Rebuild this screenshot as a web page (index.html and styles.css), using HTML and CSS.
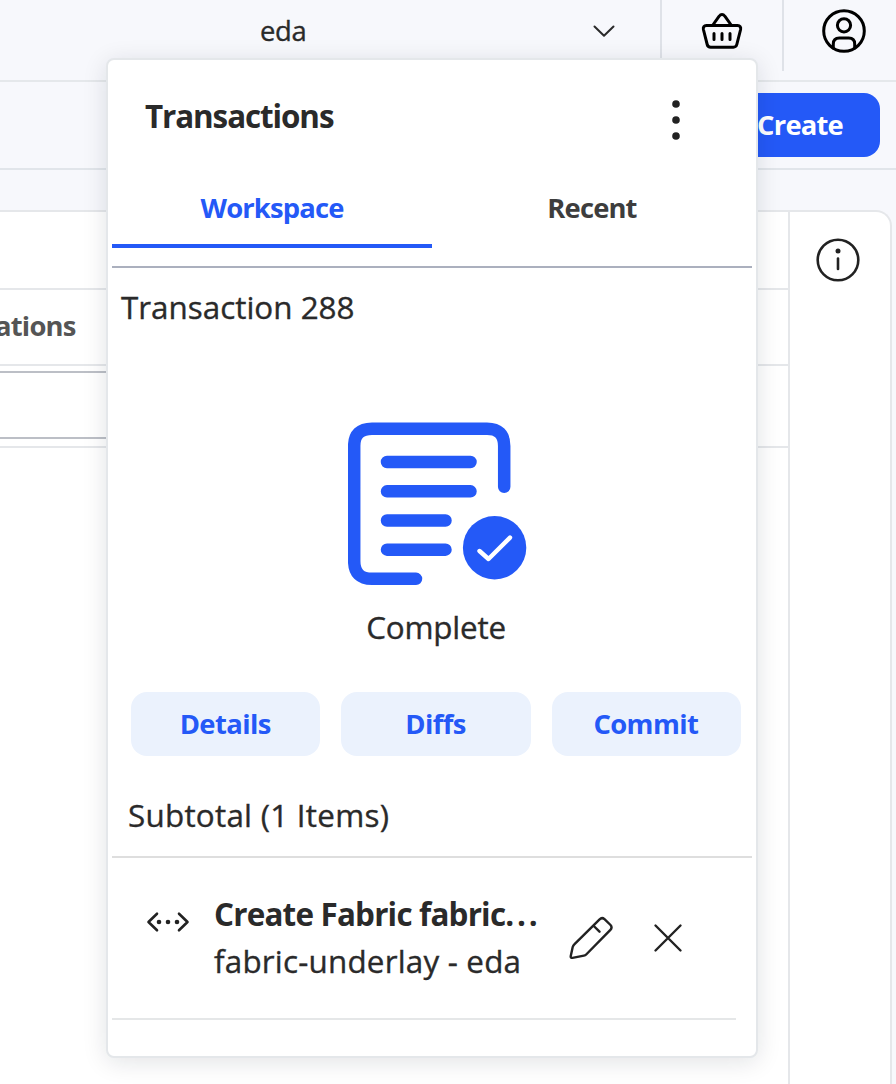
FILE: index.html
```html
<!DOCTYPE html>
<html lang="en">
<head>
<meta charset="utf-8">
<title>Transactions</title>
<link rel="stylesheet" href="styles.css">
</head>
<body>
<div class="app">
  <header class="topbar">
    <div class="namespace">
      <span class="namespace-name">eda</span>
      <svg class="chevron" width="24" height="14" viewBox="0 0 24 14"><path d="M2.500 2.500 L12 11.800 L21.500 2.500"/></svg>
    </div>
    <div class="topbar-cell basket-cell">
      <svg class="icon-black" width="44" height="40" viewBox="0 0 44 40"><path d="M12.500 14.500 L19 5.400 Q22 1.800 25 5.400 L31.500 14.500"/><path d="M6.500 14.500 H37.500 Q41.300 14.800 40.600 18.500 L36.800 33.500 Q36.100 36.200 33.300 36.200 H10.700 Q7.900 36.200 7.200 33.500 L3.400 18.500 Q2.700 14.800 6.500 14.500 Z"/><path d="M14 22.500 V28.500 M22 22.500 V28.500 M30 22.500 V28.500"/></svg>
    </div>
    <div class="topbar-cell user-cell">
      <svg class="icon-black" width="46" height="46" viewBox="0 0 46 46"><circle cx="23" cy="23" r="20.300"/><circle cx="23" cy="17.300" r="6.600"/><path d="M12.300 40 V36 Q12.300 30 18.300 30 H27.700 Q33.700 30 33.700 36 V40"/></svg>
    </div>
  </header>
  <div class="toolbar"><button class="create">Create</button></div>
  <main class="card">
    <section class="table">
      <div class="row title-row"></div>
      <div class="row head-row"><span class="head-label">ations</span></div>
      <div class="row filter-row"><div class="filter"></div></div>
    </section>
    <aside class="side">
      <svg class="info" width="46" height="46" viewBox="0 0 46 46"><circle cx="23" cy="23" r="20.300"/><circle class="dot" cx="23" cy="14" r="2.500"/><path d="M23 21.500 V32"/></svg>
    </aside>
  </main>
</div>

<section class="popup">
  <header class="popup-head">
    <h1>Transactions</h1>
    <svg class="kebab" width="10" height="42" viewBox="0 0 10 42"><circle cx="5" cy="5" r="3.800"/><circle cx="5" cy="21" r="3.800"/><circle cx="5" cy="37" r="3.800"/></svg>
  </header>
  <nav class="tabs">
    <div class="tab active">Workspace</div>
    <div class="tab">Recent</div>
  </nav>
  <h2 class="transaction">Transaction 288</h2>
  <div class="status">
    <svg width="180" height="164" viewBox="0 0 180 164">
      <g class="doc"><path d="M156.200 64.800 V24 Q156.200 6.700 139 6.700 H24 Q6.200 6.700 6.200 24 V139 Q6.200 156.800 24 156.800 H68"/><path d="M39 40 H122.500 M39 69.300 H122.500 M39 98.500 H97.500 M39 127.700 H97.500"/></g>
      <circle class="badge" cx="146.600" cy="125.700" r="31.700"/>
      <path class="check" d="M131.500 129 L140.500 137 L162 115.600"/>
    </svg>
    <p class="status-text">Complete</p>
  </div>
  <div class="actions"><button>Details</button><button>Diffs</button><button>Commit</button></div>
  <p class="subtotal">Subtotal (1 Items)</p>
  <article class="item">
    <svg class="code" width="44" height="24" viewBox="0 0 44 24"><path d="M11 3.700 L2.500 12 L11 20.300 M33 3.700 L41.500 12 L33 20.300"/><circle cx="13" cy="12" r="2.300"/><circle cx="22" cy="12" r="2.300"/><circle cx="31" cy="12" r="2.300"/></svg>
    <div class="item-text"><div class="item-title">Create Fabric fabric<span class="dots">...</span></div><div class="item-sub">fabric-underlay - eda</div></div>
    <svg class="line-icon edit" width="44" height="44" viewBox="0 0 44 44"><path d="M5.300 28.300 L30.600 3.300 Q33 1 35.500 3.200 L41.500 9 Q43.600 11.500 41.400 13.800 L17.200 38.500 Q16.300 39.400 14.900 39.700 L3.500 41.900 Q1.600 42 1.700 40.200 L3.700 31 Q4.200 29.300 5.300 28.300 Z M24.300 9.500 L30.500 15.700"/></svg>
    <svg class="line-icon close" width="30" height="30" viewBox="0 0 30 30"><path d="M2.500 2.500 L27.500 27.500 M27.500 2.500 L2.500 27.500"/></svg>
  </article>
</section>
</body>
</html>
```

FILE: styles.css
```css
* { box-sizing: border-box; }
body { margin: 0; width: 896px; height: 1084px; overflow: hidden; position: relative; background: #f7f8fc; color: #2a2a2a; font-family: "Open Sans", "Noto Sans", sans-serif; }
h1, h2, p { margin: 0; }
svg { display: block; flex: none; }
button { border: 0; font: inherit; padding: 0; }
.namespace-name, .transaction, .status-text, .subtotal, .item-sub { -webkit-text-stroke: 0.35px #2a2a2a; }
.app { height: 1084px; display: flex; flex-direction: column; }

.topbar { height: 82px; flex: none; display: flex; border-bottom: 2px solid #e5e8eb; }
.namespace { width: 660px; padding: 12px 44px 0 260px; display: flex; justify-content: space-between; align-items: flex-start; }
.namespace-name { font-size: 27.4px; line-height: 38px; letter-spacing: -0.3px; }
.chevron { margin-top: 12px; fill: none; stroke: #2a2a2a; stroke-width: 2; stroke-linecap: round; stroke-linejoin: round; }
.topbar-cell { height: 71px; border-left: 2px solid #dfe2e8; }
.basket-cell { width: 122px; padding: 11px 0 0 38px; }
.user-cell { width: 114px; padding: 8px 0 0 37px; }
.icon-black { fill: none; stroke: #000; stroke-width: 3; stroke-linecap: round; stroke-linejoin: round; }

.toolbar { height: 88px; flex: none; display: flex; justify-content: flex-end; padding: 11px 16px 0 0; border-bottom: 2px solid #e1e5ea; }
.create { width: 180px; height: 64px; padding: 0 37px 2px 0; border-radius: 16px; background: #2459f7; color: #fff; text-align: right; font-size: 27.4px; font-weight: 700; letter-spacing: -0.8px; }

.card { flex: 1; display: flex; margin: 40px 4px 0 0; border: 2px solid #e5e7ea; border-left: 0; border-bottom: 0; border-top-right-radius: 16px; background: #fff; }
.table { width: 790px; border-right: 2px solid #e5e7ea; }
.row { border-bottom: 2px solid #e5e7ea; }
.title-row { height: 78px; }
.head-row { height: 76px; padding-top: 17px; }
.head-label { display: block; margin-left: -5px; color: #555; font-size: 27.4px; line-height: 38px; font-weight: 700; letter-spacing: -0.8px; }
.filter-row { height: 82px; padding-top: 5px; }
.filter { width: 400px; height: 68px; border: solid #bcbfc6; border-width: 2px 0; }
.side { padding: 25px 0 0 25px; }
.info { fill: none; stroke: #222; stroke-width: 2.6; stroke-linecap: round; }
.info .dot { fill: #222; stroke: none; }

.popup { position: absolute; left: 106px; top: 58px; width: 652px; height: 1000px; padding: 0 4px; border: 2px solid #e4e7ea; border-radius: 8px; background: #fff; box-shadow: 0 4px 24px rgba(20, 24, 40, 0.12); }
.popup-head { height: 112px; display: flex; justify-content: space-between; align-items: flex-start; padding: 35px 71px 0 33px; }
.popup-head h1 { font-size: 31.4px; line-height: 42px; font-weight: 700; letter-spacing: -1.1px; }
.kebab { margin-top: 4px; fill: #222; }
.tabs { height: 96px; display: flex; border-bottom: 2px solid #abb0be; }
.tab { width: 320px; height: 76px; padding-top: 17px; text-align: center; font-size: 27.4px; line-height: 38px; font-weight: 700; letter-spacing: -0.85px; color: #3d3d3d; }
.tab.active { color: #2459f7; border-bottom: 4px solid #2459f7; }
.transaction { height: 154px; padding: 18px 0 0 9px; font-size: 31.4px; line-height: 42px; font-weight: 400; letter-spacing: 0; }
.status { height: 270px; padding-left: 236px; }
.doc { fill: none; stroke: #2459f7; stroke-width: 12.5; stroke-linecap: round; }
.badge { fill: #2459f7; }
.check { fill: none; stroke: #fff; stroke-width: 4.4; stroke-linecap: round; stroke-linejoin: round; }
.status-text { width: 176px; padding-top: 20px; text-align: center; font-size: 31.4px; line-height: 42px; letter-spacing: -0.2px; }
.actions { height: 64px; display: grid; grid-template-columns: repeat(3, 1fr); column-gap: 21px; padding: 0 11px 0 19px; }
.actions button { padding: 0 1px 2px 0; border-radius: 16px; background: #ebf2fd; color: #2459f7; font-size: 27.4px; font-weight: 700; letter-spacing: -0.6px; }
.subtotal { height: 102px; padding: 38px 0 0 16px; border-bottom: 2px solid #dedede; font-size: 31.4px; line-height: 42px; letter-spacing: 0.25px; }
.item { width: 624px; height: 162px; display: flex; padding: 32px 0 0 34px; border-bottom: 2px solid #e5e7e8; }
.code { margin-top: 20px; stroke: #222; fill: none; stroke-width: 2.6; stroke-linecap: round; stroke-linejoin: round; }
.code circle { fill: #222; stroke: none; }
.item-text { width: 330px; margin-left: 24px; line-height: 46px; font-size: 31.4px; white-space: nowrap; }
.item-title { line-height: 48px; font-weight: 700; letter-spacing: -0.8px; }
.item-sub { letter-spacing: 0.2px; }
.dots { letter-spacing: 2.8px; }
.line-icon { fill: none; stroke: #222; stroke-width: 2.4; stroke-linecap: round; stroke-linejoin: round; }
.edit { margin: 26px 0 0 25px; }
.close { margin: 33px 0 0 40px; }
```
